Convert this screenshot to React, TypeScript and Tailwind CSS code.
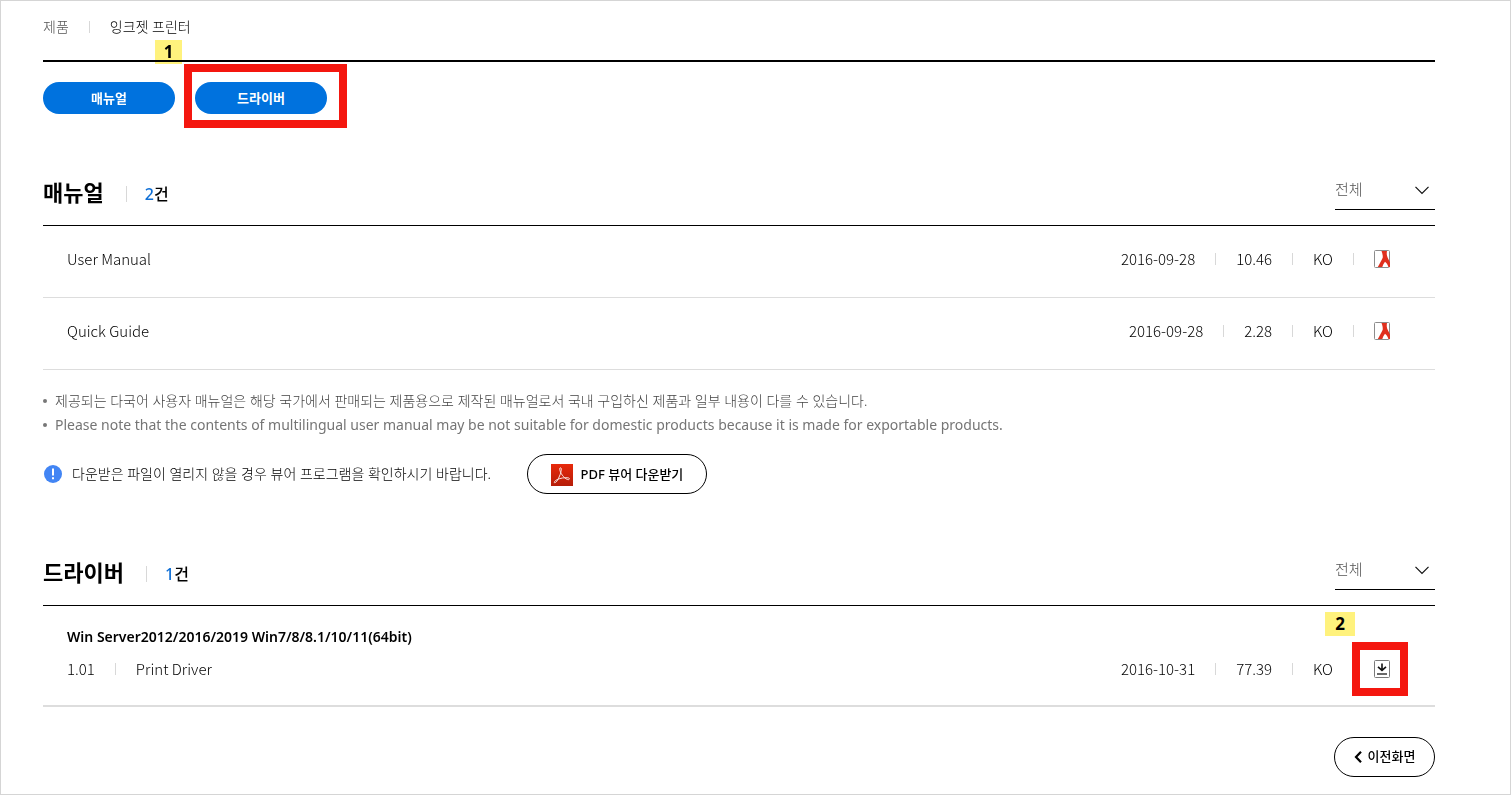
import type { ReactNode } from 'react';

type ManualItem = { title: string; date: string; size: string; lang: string };

const manuals: ManualItem[] = [
  { title: 'User Manual', date: '2016-09-28', size: '10.46', lang: 'KO' },
  { title: 'Quick Guide', date: '2016-09-28', size: '2.28', lang: 'KO' },
];

function Divider({ tall = false }: { tall?: boolean }) {
  return <span aria-hidden="true" className={tall ? 'h-4 w-px bg-[#d8d8d8]' : 'h-3 w-px bg-[#d8d8d8]'} />;
}

function PdfIcon() {
  return (
    <svg width="16" height="18" viewBox="0 0 16 18" aria-hidden="true">
      <rect x="0.5" y="0.5" width="15" height="17" rx="1" fill="#fff" stroke="#8c8c8c" />
      <path
        d="M7.500 1H13c-.5 2.600-.3 4.600.7 6.700L16 12.500V17h-1.600c-.8-2.400-1.900-4.200-3.400-5.200-1.300 1.500-2.200 3.200-2.700 5.200H3.800c1.700-3 3.600-6.200 4.900-9.200C9 5.500 8.300 3 7.500 1z"
        fill="#e0301e"
      />
    </svg>
  );
}

function AcrobatIcon() {
  return (
    <svg width="22" height="22" viewBox="0 0 22 22" aria-hidden="true">
      <defs>
        <linearGradient id="acrobat" x1="0" y1="0" x2="0" y2="1">
          <stop offset="0" stopColor="#e8290b" />
          <stop offset="1" stopColor="#b51d08" />
        </linearGradient>
      </defs>
      <rect width="22" height="22" fill="url(#acrobat)" />
      <path
        d="M3.600 17.600c-1.100 1.500.9 1.700 2.300-.5 2.500-3.800 4.500-9 4.400-12.200-.1-1.700-1.800-1.500-1.600.3.400 3.700 4 8.800 7.700 10.300 2 .7 2.800-1.200 1.100-1.600-3.200-.7-9 .2-12.300 2.200-.7.400-1.200.9-1.600 1.500z"
        fill="none"
        stroke="#fbe3df"
        strokeWidth="1"
      />
    </svg>
  );
}

function DownloadIcon() {
  return (
    <svg width="16" height="18" viewBox="0 0 16 18" fill="none" aria-hidden="true">
      <rect x="0.5" y="0.5" width="15" height="17" rx="1" fill="#fff" stroke="#7a7a7a" />
      <path d="M8 3.500v6.500M4 6.800L8 10.400l4-3.600" stroke="#111" strokeWidth="1.600" />
      <path d="M3 14h10" stroke="#444" strokeWidth="1.600" />
    </svg>
  );
}

function Step({ children, className }: { children: ReactNode; className: string }) {
  return (
    <span
      className={`absolute flex h-6 items-center justify-center bg-[#fff27d] text-[17px] leading-6 font-bold mix-blend-multiply ${className}`}
    >
      {children}
    </span>
  );
}

function SectionHeader({ id, title, count }: { id: string; title: string; count: number }) {
  return (
    <div className="flex items-end justify-between border-b border-black pb-[15px]">
      <div className="flex items-center pb-0.5">
        <h2 className="text-[22px] leading-8 font-bold">{title}</h2>
        <div className="mt-1 flex items-center gap-[18px] pl-[22px]">
          <Divider tall />
          <p className="text-base leading-6 font-medium">
            <span className="text-[#0f6fd6]">{count}</span>건
          </p>
        </div>
      </div>
      <div className="relative w-[100px]">
        <select
          id={id}
          aria-label={`${title} 분류`}
          className="h-10 w-full appearance-none border-b border-black bg-transparent text-[15px] font-light text-[#555] outline-none"
        >
          <option>전체</option>
        </select>
        <svg
          className="pointer-events-none absolute top-4 right-1.5"
          width="14"
          height="9"
          viewBox="0 0 14 9"
          fill="none"
          aria-hidden="true"
        >
          <path d="M0.500 0.800L7 7.500l6.500-6.700" stroke="#111" strokeWidth="1.200" />
        </svg>
      </div>
    </div>
  );
}

function Meta({ date, size, lang, children }: { date: string; size: string; lang: string; children: ReactNode }) {
  return (
    <div className="flex items-center gap-5 pr-[45px]">
      <span>{date}</span>
      <Divider />
      <span>{size}</span>
      <Divider />
      <span>{lang}</span>
      <Divider />
      {children}
    </div>
  );
}

export default function App() {
  return (
    <div className="min-h-screen border border-[#d5d5d5] bg-white pr-[75px] pb-[17px] pl-[42px] font-['Noto_Sans','Noto_Sans_CJK_KR',sans-serif] text-black">
      <nav className="relative flex items-center gap-5 border-b-2 border-black pt-3.5 pb-[21px] text-sm leading-6 font-light">
        <a href="#products" className="text-[#555]">
          제품
        </a>
        <Divider />
        <a href="#inkjet">잉크젯 프린터</a>
        <Step className="top-[39px] left-[112px] w-[27px]">1</Step>
      </nav>

      <div className="flex gap-5 pt-5">
        <button type="button" className="h-8 w-33 rounded-full bg-[#0072de] pt-0.5 text-[13px] font-bold text-white">
          매뉴얼
        </button>
        <div className="relative flex">
          <button type="button" className="h-8 w-33 rounded-full bg-[#0072de] pt-0.5 text-[13px] font-bold text-white">
            드라이버
          </button>
          <span
            aria-hidden="true"
            className="pointer-events-none absolute -top-[18px] -right-5 -bottom-3.5 -left-[11px] border-8 border-[#f4170f]"
          />
        </div>
      </div>

      <main>
        <section className="pt-14">
          <SectionHeader id="manual-filter" title="매뉴얼" count={2} />
          <ul className="font-['Noto_Sans_CJK_KR',sans-serif]">
            {manuals.map((item) => (
              <li
                key={item.title}
                className="flex h-18 items-center justify-between border-b border-[#ddd] pb-1.5 pl-6 text-[15px] leading-6 font-light"
              >
                <span>{item.title}</span>
                <Meta date={item.date} size={item.size} lang={item.lang}>
                  <a href="#pdf" aria-label={`${item.title} PDF`}>
                    <PdfIcon />
                  </a>
                </Meta>
              </li>
            ))}
          </ul>
          <ul className="pt-[19px] text-sm leading-6 text-[#757575]">
            <li className="flex items-center gap-2 font-light text-[#444]">
              <span aria-hidden="true" className="size-1 rounded-full bg-[#777]" />
              제공되는 다국어 사용자 매뉴얼은 해당 국가에서 판매되는 제품용으로 제작된 매뉴얼로서 국내 구입하신 제품과 일부 내용이
              다를 수 있습니다.
            </li>
            <li className="flex items-center gap-2">
              <span aria-hidden="true" className="size-1 rounded-full bg-[#777]" />
              Please note that the contents of multilingual user manual may be not suitable for domestic products because it is
              made for exportable products.
            </li>
          </ul>
          <div className="flex items-center pt-[17px]">
            <svg className="mr-2.5 ml-px" width="18" height="18" viewBox="0 0 18 18" aria-hidden="true">
              <circle cx="9" cy="9" r="9" fill="#4285f4" />
              <path d="M9 3.500v7M9 12.300v2" stroke="#fff" strokeWidth="2" />
            </svg>
            <p className="text-sm leading-6 font-light">
              다운받은 파일이 열리지 않을 경우 뷰어 프로그램을 확인하시기 바랍니다.
            </p>
            <a
              href="#viewer"
              className="ml-9 flex h-10 w-[180px] items-center justify-center gap-2 rounded-full border border-black pt-0.5 text-[13px] font-medium"
            >
              <AcrobatIcon />
              PDF 뷰어 다운받기
            </a>
          </div>
        </section>

        <section className="pt-14">
          <SectionHeader id="driver-filter" title="드라이버" count={1} />
          <div className="relative border-b-2 border-[#ddd] pt-[19px] pb-6 pl-6 leading-6">
            <h3 className="text-sm leading-6 font-semibold">Win Server2012/2016/2019 Win7/8/8.1/10/11(64bit)</h3>
            <div className="flex items-center justify-between pt-2 font-['Noto_Sans_CJK_KR',sans-serif] text-[15px] leading-6 font-light">
              <div className="flex items-center gap-5">
                <span>1.01</span>
                <Divider />
                <span>Print Driver</span>
              </div>
              <Meta date="2016-10-31" size="77.39" lang="KO">
                <span className="relative">
                  <button type="button" aria-label="다운로드" className="block">
                    <DownloadIcon />
                  </button>
                  <span
                    aria-hidden="true"
                    className="pointer-events-none absolute -top-[18px] -right-[18px] -bottom-[18px] -left-[22px] border-8 border-[#f4170f]"
                  />
                </span>
              </Meta>
            </div>
            <Step className="top-1.5 right-20 w-[30px]">2</Step>
          </div>
        </section>

        <div className="flex justify-end pt-[30px]">
          <button
            type="button"
            className="flex h-10 w-[101px] items-center justify-center gap-1.5 rounded-full border border-black text-[13px] font-medium"
          >
            <svg width="8" height="12" viewBox="0 0 8 12" fill="none" aria-hidden="true">
              <path d="M7 0.800L2 6l5 5.200" stroke="#000" strokeWidth="2.200" />
            </svg>
            이전화면
          </button>
        </div>
      </main>
    </div>
  );
}
